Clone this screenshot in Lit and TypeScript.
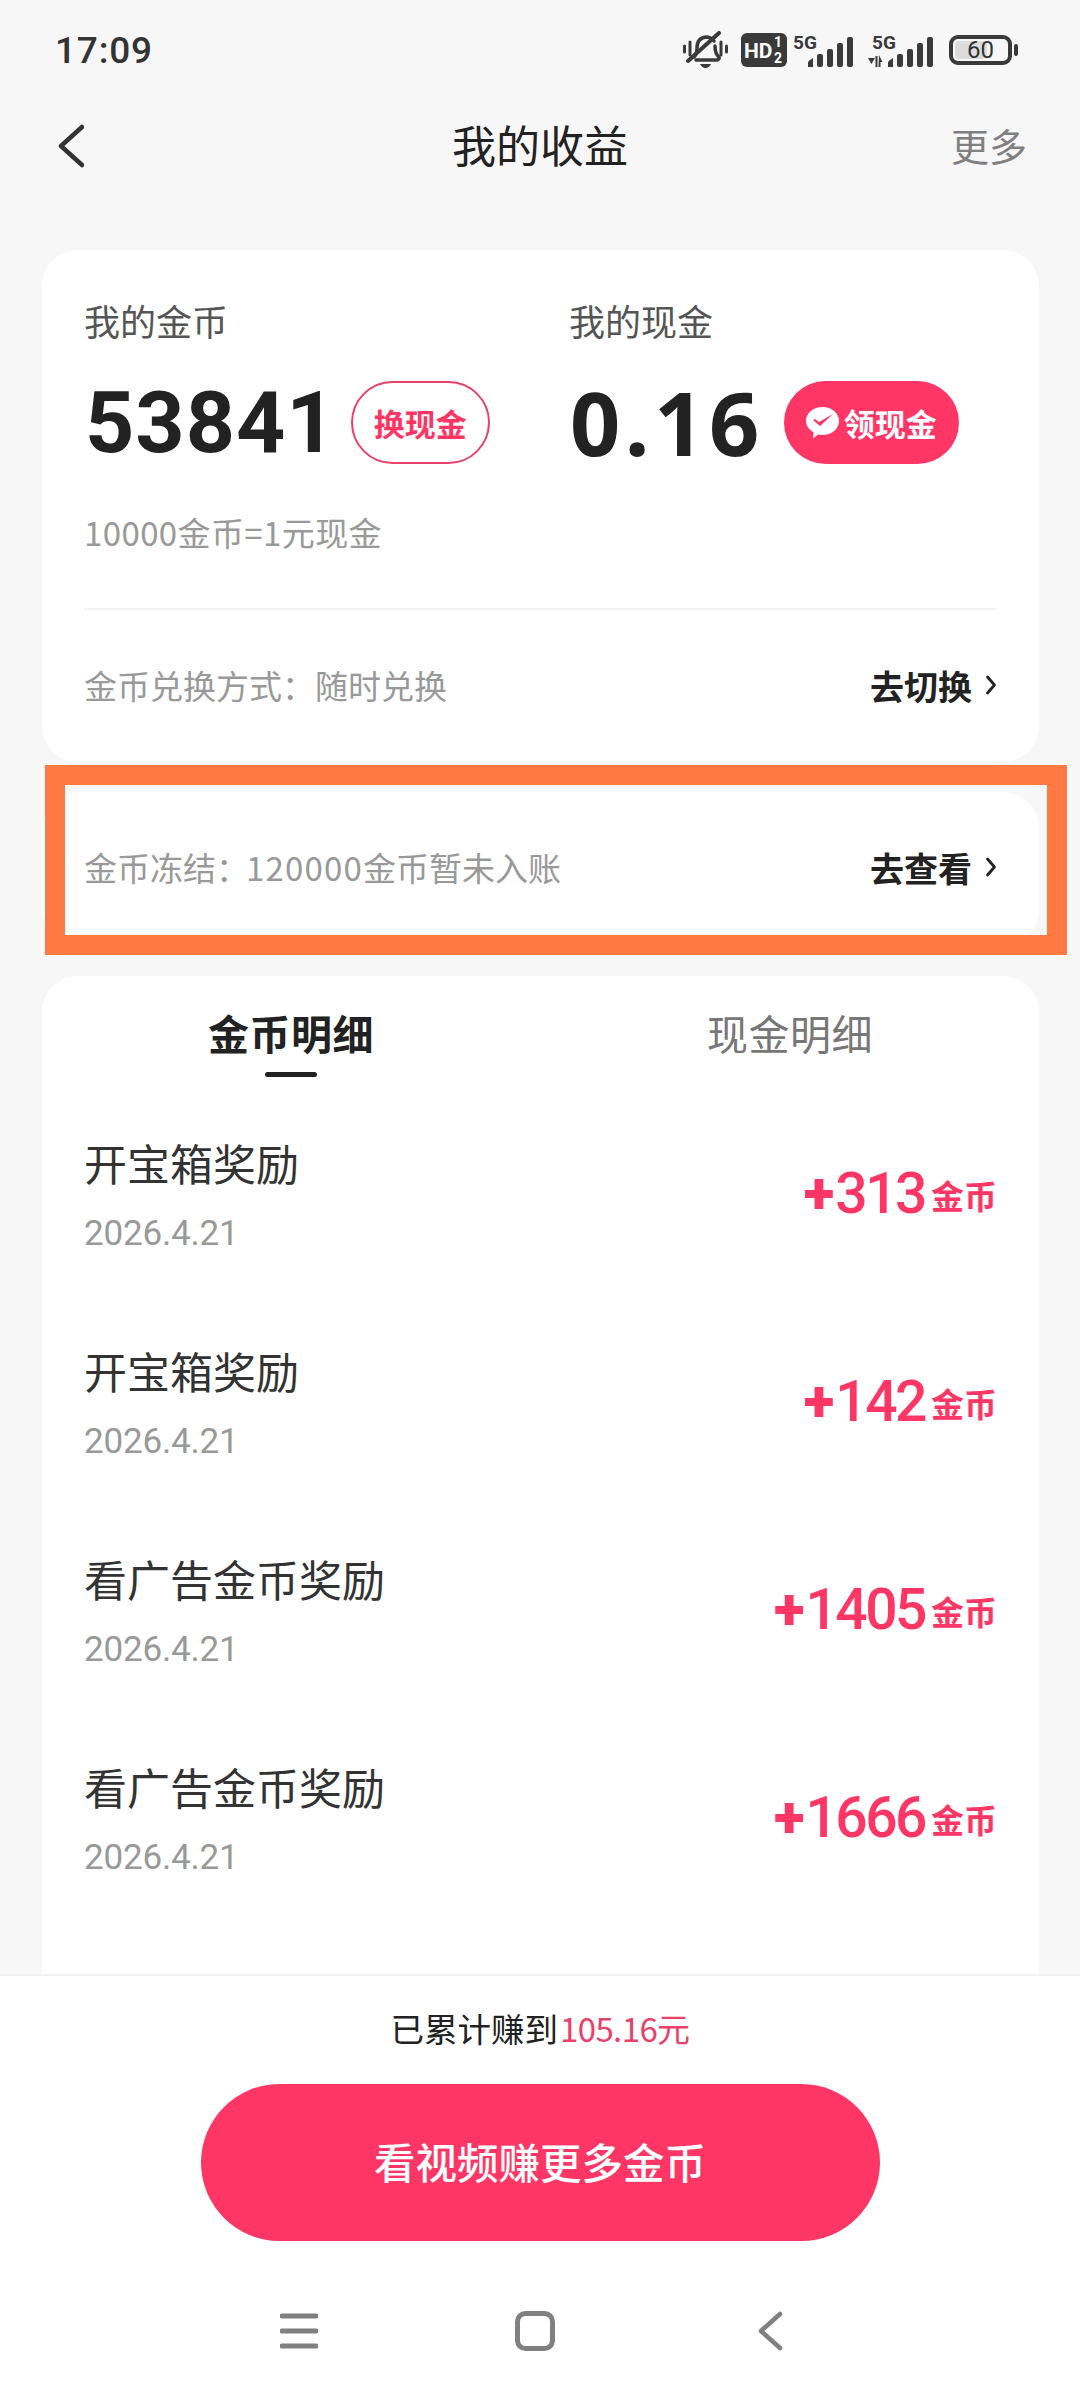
import { LitElement, html, css, svg } from "lit";
import { customElement } from "lit/decorators.js";

const rows = [
  ["开宝箱奖励", "2026.4.21", "313"],
  ["开宝箱奖励", "2026.4.21", "142"],
  ["看广告金币奖励", "2026.4.21", "1405"],
  ["看广告金币奖励", "2026.4.21", "1666"],
];

const signal = svg`
  <path d="M0 30v-4q0-2 2-3l3-2v9z" fill="#3a3a3a"/>
  <rect x="9" y="17" width="6" height="13" rx="2" fill="#3a3a3a"/>
  <rect x="19" y="12" width="6" height="18" rx="2" fill="#3a3a3a"/>
  <rect x="29" y="6" width="6" height="24" rx="2" fill="#3a3a3a"/>
  <rect x="39" y="0" width="6" height="30" rx="2" fill="#3a3a3a"/>`;

@customElement("app-root")
export class AppRoot extends LitElement {
  static styles = css`
    :host { display: block; font-family: "Noto Sans CJK SC", "Noto Sans", sans-serif; }
    * { box-sizing: border-box; }
    .page { width: 1080px; height: 2400px; background: #f7f7f7; display: flex; flex-direction: column; overflow: hidden; }
    .status { height: 100px; flex: none; display: flex; align-items: center; justify-content: space-between; padding: 0 62px 0 55px; }
    .time { font: 500 37px "Roboto", sans-serif; letter-spacing: 0.8px; color: #333; }
    .icons { display: flex; align-items: center; }
    .icons svg { display: block; flex: none; }
    .hd { margin-left: 13px; }
    .net { margin-left: 6px; }
    .net2 { margin-left: 13px; }
    .batt { margin-left: 14px; width: 63px; height: 30px; border: 4px solid #3a3a3a; border-radius: 9px; position: relative; display: flex; align-items: center; justify-content: center; font: 400 24px "Roboto", sans-serif; color: #333; }
    .batt i { position: absolute; left: 2px; top: 2px; bottom: 2px; width: 32px; border-radius: 3px; background: #dcdcdc; }
    .batt span { position: relative; }
    .nub { margin-left: 2px; width: 4px; height: 12px; border-radius: 2px; background: #3a3a3a; }
    .nav { height: 92px; flex: none; position: relative; display: flex; align-items: center; justify-content: space-between; padding: 0 53px 0 58px; }
    .nav-title { position: absolute; left: 0; right: 0; text-align: center; font-size: 44px; color: #222; padding-bottom: 4px; }
    .more { font-size: 38px; color: #808080; position: relative; padding-bottom: 4px; }
    .main { flex: 1; min-height: 0; overflow: hidden; padding: 58px 41px 0 42px; display: flex; flex-direction: column; gap: 30px; }
    .card { background: #fff; border-radius: 36px; flex: none; }
    .top { padding: 46px 42px 0; height: 512px; }
    .balances { display: flex; }
    .bal { width: 485px; }
    .bal + .bal { width: auto; }
    .lab { font-size: 36px; line-height: 48px; color: #555; }
    .valrow { display: flex; align-items: center; margin-top: 37px; height: 83px; line-height: 83px; }
    .coin { font: 700 86px/83px "Roboto", sans-serif; color: #222; letter-spacing: 1px; margin-left: 1px; }
    .cash { font: 700 88px/83px "Noto Sans", sans-serif; color: #222; letter-spacing: 4.500px; margin-left: 1px; }
    .pill { height: 83px; border-radius: 42px; display: flex; align-items: center; justify-content: center; font-size: 31px; font-weight: 700; line-height: 40px; }
    .pill.o { width: 139px; margin-left: 14px; border: 2.500px solid #e8416b; color: #fe3666; }
    .pill.f { width: 175px; margin-left: 20px; background: #fe3666; color: #fff; gap: 5px; }
    .rate { font-size: 33px; line-height: 48px; color: #999; margin-top: 44px; letter-spacing: 0.4px; }
    .line { height: 2px; background: #f2f2f2; margin-top: 52px; }
    .action { display: flex; align-items: center; justify-content: space-between; font-size: 33px; color: #999; }
    .top .action { height: 150px; }
    .num { letter-spacing: 1.2px; }
    .colon { letter-spacing: -3px; }
    .go { display: flex; align-items: center; gap: 13px; font-weight: 700; color: #222; font-size: 34px; }
    .frozen { height: 154px; padding: 0 42px; position: relative; }
    .frozen .action { height: 150px; }
    .frame { position: absolute; left: 3px; top: -27px; width: 1022px; height: 190px; border: 20px solid #ff7a42; }
    .list { height: 1200px; }
    .tabs { display: flex; height: 118px; position: relative; }
    .tab { width: 496px; height: 118px; text-align: center; line-height: 113px; font-size: 41px; letter-spacing: 0.5px; color: #777; }
    .tab.on { color: #222; font-weight: 700; position: relative; }
    .tab:first-child { width: 500px; padding-right: 2px; }
    .bar { width: 52px; height: 5px; background: #222; border-radius: 3px; position: absolute; left: 223px; bottom: 17px; }
    .row { height: 208px; padding: 0 42px; display: flex; align-items: center; justify-content: space-between; }
    .info { margin-bottom: 6px; }
    .t { font-size: 43px; line-height: 60px; color: #333; }
    .d { font: 400 35px/50px "Roboto", sans-serif; color: #999; margin-top: 17px; letter-spacing: -0.2px; }
    .amt { color: #fe3666; margin-bottom: 8px; white-space: nowrap; font: 500 57px/70px "Roboto", sans-serif; letter-spacing: -2.500px; }
    .amt em { font-style: normal; font-weight: 900; letter-spacing: 1px; }
    .amt span { font: 700 33px "Noto Sans CJK SC", sans-serif; letter-spacing: 0; margin-left: 6px; vertical-align: 4px; }
    .footer { height: 426px; flex: none; background: #fff; border-top: 2px solid #f2f2f2; display: flex; flex-direction: column; align-items: center; }
    .sum { margin-top: 28px; font-size: 33.500px; line-height: 48px; color: #222; }
    .sum span { color: #e8416b; font-size: 33px; letter-spacing: -0.6px; margin-left: 2px; }
    .cta { margin-top: 32px; width: 679px; height: 157px; border-radius: 79px; background: #fe3666; color: #fff; font-size: 41.500px; font-weight: 500; display: flex; align-items: center; justify-content: center; padding-bottom: 4px; }
    .sysnav { margin-top: 70px; display: flex; width: 503px; margin-right: 17px; justify-content: space-between; align-items: center; }
    .home { margin-right: 6px; }
  `;

  private chev() {
    return html`<svg width="12" height="20" viewBox="0 0 12 20"><path d="M2.500 2l7 8-7 8" fill="none" stroke="#222" stroke-width="2.800" stroke-linecap="round" stroke-linejoin="round"/></svg>`;
  }

  render() {
    return html`<div class="page">
      <div class="status">
        <div class="time">17:09</div>
        <div class="icons">
          <svg width="45" height="38" viewBox="0 0 45 38">
            <g fill="none" stroke="#3a3a3a" stroke-linecap="round" stroke-linejoin="round">
              <path stroke-width="3.500" d="M11 26q3-3 3-9 0-10 9-11 5 0 8 4M32 15q0 8 4 11 1 2-2 3H13"/>
              <path stroke-width="4" d="M5 30 L36 2"/>
              <path stroke-width="3" d="M1.500 15v6M7 11v13M38 11v13M43.500 15v6"/>
            </g>
            <path d="M17 33h11q-2 4-5.500 4t-5.500-4z" fill="#3a3a3a"/>
          </svg>
          <svg class="hd" width="46" height="34" viewBox="0 0 46 34">
            <rect width="46" height="34" rx="6" fill="#3a3a3a"/>
            <text x="3" y="25" font-family="Roboto" font-weight="700" font-size="21" fill="#fff">HD</text>
            <text x="33" y="14" font-family="Roboto" font-weight="700" font-size="14" fill="#fff">1</text>
            <text x="33" y="30" font-family="Roboto" font-weight="700" font-size="14" fill="#fff">2</text>
          </svg>
          <svg class="net" width="62" height="36" viewBox="0 -4 62 36">
            <text x="0" y="13" font-family="Roboto" font-weight="700" font-size="19" fill="#3a3a3a">5G</text>
            <g transform="translate(15 1)">${signal}</g>
          </svg>
          <svg class="net2" width="67" height="36" viewBox="0 -4 67 36">
            <text x="4" y="13" font-family="Roboto" font-weight="700" font-size="19" fill="#3a3a3a">5G</text>
            <path d="M0 22h7l-3.500 6zM7.500 20h2v11h-2zM11 19l3.500 7h-2v5h-2z" fill="#3a3a3a"/>
            <g transform="translate(20 1)">${signal}</g>
          </svg>
          <div class="batt"><i></i><span>60</span></div>
          <div class="nub"></div>
        </div>
      </div>
      <div class="nav">
        <svg width="26" height="44" viewBox="0 0 26 44"><path d="M24 3L3 22l21 19" fill="none" stroke="#333" stroke-width="4.500" stroke-linecap="round" stroke-linejoin="round"/></svg>
        <div class="nav-title">我的收益</div>
        <div class="more">更多</div>
      </div>
      <div class="main">
        <div class="card top">
          <div class="balances">
            <div class="bal">
              <div class="lab">我的金币</div>
              <div class="valrow"><div class="coin">53841</div><div class="pill o">换现金</div></div>
            </div>
            <div class="bal">
              <div class="lab">我的现金</div>
              <div class="valrow"><div class="cash">0.16</div><div class="pill f">
                <svg width="33" height="32" viewBox="0 0 33 32"><path d="M16.500 0C25.500 0 33 6 33 14s-7.500 14-16.500 14c-1.500 0-3-.2-4.400-.5L7 31.500l.6-6.300C3 22.700 0 18.600 0 14 0 6 7.500 0 16.500 0z" fill="#fff"/><path d="M7 13l2-1 4 3L27 7 14 19z" fill="#fe3666"/></svg>
                领现金</div></div>
            </div>
          </div>
          <div class="rate">10000金币=1元现金</div>
          <div class="line"></div>
          <div class="action"><div>金币兑换方式：随时兑换</div><div class="go">去切换${this.chev()}</div></div>
        </div>
        <div class="card frozen">
          <div class="action"><div>金币冻结<span class="colon">：</span><span class="num">120000</span>金币暂未入账</div><div class="go">去查看${this.chev()}</div></div>
          <div class="frame"></div>
        </div>
        <div class="card list">
          <div class="tabs">
            <div class="tab on">金币明细<div class="bar"></div></div>
            <div class="tab">现金明细</div>
          </div>
          ${rows.map(r => html`<div class="row">
            <div class="info"><div class="t">${r[0]}</div><div class="d">${r[1]}</div></div>
            <div class="amt"><em>+</em>${r[2]}<span>金币</span></div>
          </div>`)}
        </div>
      </div>
      <div class="footer">
        <div class="sum">已累计赚到<span>105.16元</span></div>
        <div class="cta">看视频赚更多金币</div>
        <div class="sysnav">
          <svg width="38" height="36" viewBox="0 0 38 36"><path d="M2 3h34M2 18h34M2 33h34" stroke="#808080" stroke-width="5" stroke-linecap="round"/></svg>
          <svg class="home" width="40" height="40" viewBox="0 0 40 40"><rect x="2.500" y="2.500" width="35" height="35" rx="8" fill="none" stroke="#808080" stroke-width="5"/></svg>
          <svg width="26" height="40" viewBox="0 0 26 40"><path d="M23 3L4 20l19 17" fill="none" stroke="#808080" stroke-width="4.500" stroke-linecap="round" stroke-linejoin="round"/></svg>
        </div>
      </div>
    </div>`;
  }
}
